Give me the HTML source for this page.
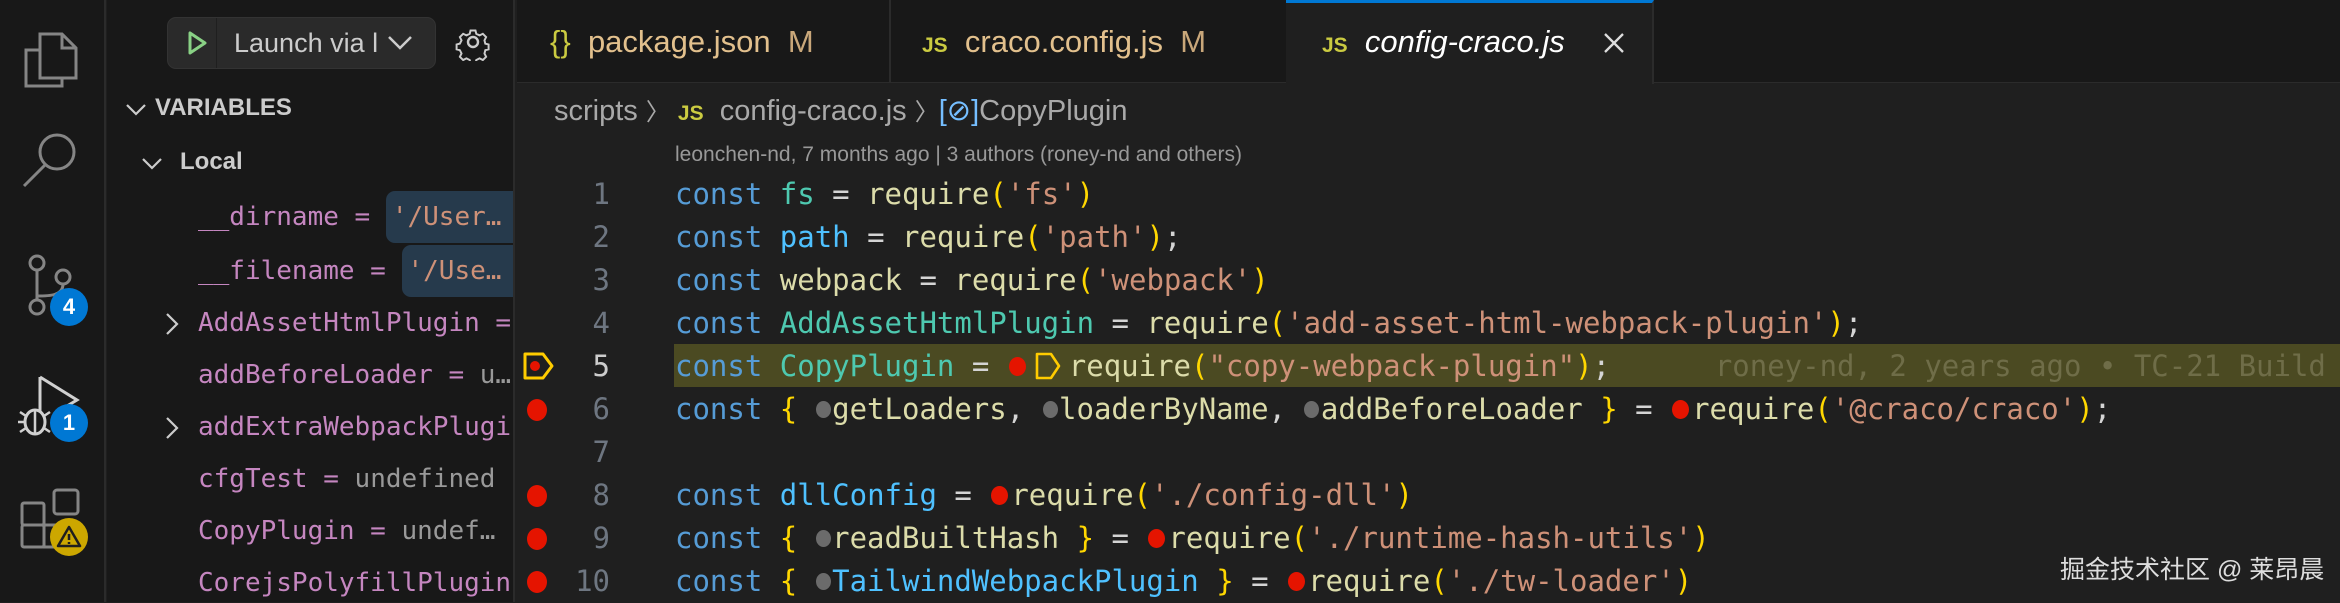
<!DOCTYPE html>
<html><head><meta charset="utf-8"><style>
*{margin:0;padding:0;box-sizing:border-box}
body{width:2340px;height:602px;background:#1f1f1f;overflow:hidden;position:relative;font-family:"Liberation Sans","DejaVu Sans",sans-serif}
.abs{position:absolute;white-space:pre}
#act{position:absolute;left:0;top:0;width:106px;height:602px;background:#181818;border-right:2px solid #2b2b2b}
#side{position:absolute;left:107px;top:0;width:408px;height:602px;background:#181818;border-right:2px solid #2b2b2b;overflow:hidden}
.mono{font-family:"DejaVu Sans Mono","Liberation Mono",monospace}
.sv{font-size:26px;color:#c586c0;height:50px;line-height:50px}
.vb{display:inline-block;background:#263a4c;border-radius:9px;padding:0 40px 0 6px;height:52px;line-height:52px;color:#ce9178}
.code{font-family:"DejaVu Sans Mono","Liberation Mono",monospace;font-size:29px;left:675px;height:43px;line-height:43px;color:#d4d4d4}
.ln{font-family:"DejaVu Sans Mono","Liberation Mono",monospace;font-size:29px;width:80px;text-align:right;left:530px;height:43px;line-height:43px;color:#6e7681}
.k{color:#569cd6}.c{color:#4ec9b0}.f{color:#dcdcaa}.s{color:#ce9178}.v{color:#4fc1ff}.b{color:#ffd700}
.gd{display:inline-block;width:17.4px;height:43px;position:relative;vertical-align:top}
.gd:after{content:"";position:absolute;left:1px;top:13px;width:15px;height:17px;border-radius:50%;background:#6b6b6b}
.rd{display:inline-block;width:22px;height:43px;position:relative;vertical-align:top}
.rd:after{content:"";position:absolute;left:2px;top:12px;width:17px;height:19px;border-radius:50%;background:#e51400}
.bp{position:absolute;left:527px;width:20px;height:22px;border-radius:50%;background:#e51400}
</style></head><body>
<div id="act">
<svg width="106" height="602" style="position:absolute;left:0;top:0" fill="none" stroke="#858585" stroke-width="3">
 <path d="M40 34h22l14 14v30h-36z M62 34v14h14"/>
 <path d="M40 50h-14v36h36v-8"/>
 <circle cx="57" cy="152" r="17"/><path d="M45 165l-21 21"/>
 <circle cx="37" cy="263" r="7"/><circle cx="63" cy="277" r="7"/><circle cx="37" cy="307" r="7"/>
 <path d="M37 270v30 M63 284c0 12-14 12-26 12"/>
 <path d="M40 377v35 M40 377l37 23-20 12" stroke="#d0d0d0"/>
 <ellipse cx="35" cy="422" rx="10" ry="12" stroke="#d0d0d0"/><path d="M20 412l6 4M20 432l6-4M18 422h7M50 412l-6 4M50 432l-6-4M35 410v24" stroke="#d0d0d0" stroke-width="2.5"/>
 <rect x="22" y="503" width="22" height="22" rx="2"/><rect x="22" y="525" width="22" height="22" rx="2"/><rect x="44" y="525" width="16" height="22"/>
 <rect x="54" y="490" width="24" height="24" rx="3"/>
</svg>
<div class="abs" style="left:50px;top:288px;width:38px;height:38px;border-radius:50%;background:#0078d4;color:#fff;font-weight:bold;font-size:22px;text-align:center;line-height:38px">4</div>
<div class="abs" style="left:50px;top:404px;width:38px;height:38px;border-radius:50%;background:#0078d4;color:#fff;font-weight:bold;font-size:22px;text-align:center;line-height:38px">1</div>
<div class="abs" style="left:50px;top:518px;width:38px;height:38px;border-radius:50%;background:#cca700"><svg width="38" height="38"><path d="M19 9L30 28H8z" fill="none" stroke="#1e1e1e" stroke-width="2.5" stroke-linejoin="round"/><path d="M19 16v6M19 24v2" stroke="#1e1e1e" stroke-width="2.5"/></svg></div>
</div>
<div id="side">
 <div class="abs" style="left:60px;top:17px;width:269px;height:52px;background:#2a2a2a;border:1px solid #333;border-radius:9px"></div>
 <div class="abs" style="left:109px;top:18px;width:1px;height:50px;background:#1f1f1f"></div>
 <svg class="abs" style="left:75px;top:28px" width="30" height="30"><path d="M8 5v20l15-10z" fill="none" stroke="#89d185" stroke-width="3" stroke-linejoin="round"/></svg>
 <div class="abs" style="left:127px;top:24px;font-size:27px;color:#cccccc;line-height:38px">Launch via l</div>
 <svg class="abs" style="left:278px;top:30px" width="30" height="24"><path d="M4 7l11 11 11-11" fill="none" stroke="#ccc" stroke-width="2.5"/></svg>
 <svg class="abs" style="left:347px;top:23px" width="38" height="38" fill="none" stroke="#ccc" stroke-width="2.4"><circle cx="19" cy="19" r="5"/><path d="M16 5h6l1 4 4 2 4-2 4 4-2 4 1 4 4 1v6l-4 1-1 4 2 4-4 4-4-2-4 2-1 4h-6l-1-4-4-2-4 2-4-4 2-4-2-4-4-1v-6l4-1 2-4-2-4 4-4 4 2 4-2z" transform="translate(19 19) scale(.82) translate(-19 -19)"/></svg>
 <svg class="abs" style="left:16px;top:98px" width="26" height="24"><path d="M4 7l9 9 9-9" fill="none" stroke="#ccc" stroke-width="2.2"/></svg>
 <div class="abs" style="left:48px;top:94px;font-size:24px;font-weight:bold;color:#cccccc">VARIABLES</div>
 <svg class="abs" style="left:32px;top:152px" width="26" height="24"><path d="M4 7l9 9 9-9" fill="none" stroke="#ccc" stroke-width="2.2"/></svg>
 <div class="abs" style="left:73px;top:148px;font-size:24px;font-weight:bold;color:#cccccc">Local</div>
 <div class="abs mono sv" style="left:91px;top:191px">__dirname = <span class="vb">'/User…</span></div>
 <div class="abs mono sv" style="left:91px;top:245px">__filename = <span class="vb">'/Use…</span></div>
 <div class="abs mono sv" style="left:91px;top:298px">AddAssetHtmlPlugin =</div>
 <div class="abs mono sv" style="left:91px;top:350px">addBeforeLoader = <span style="color:#999">u…</span></div>
 <div class="abs mono sv" style="left:91px;top:402px">addExtraWebpackPlugi</div>
 <div class="abs mono sv" style="left:91px;top:454px">cfgTest = <span style="color:#999">undefined</span></div>
 <div class="abs mono sv" style="left:91px;top:506px">CopyPlugin = <span style="color:#999">undef…</span></div>
 <div class="abs mono sv" style="left:91px;top:558px">CorejsPolyfillPlugin</div>
 <svg class="abs" style="left:55px;top:311px" width="20" height="26"><path d="M5 3l10 10-10 10" fill="none" stroke="#ccc" stroke-width="2.2"/></svg>
 <svg class="abs" style="left:55px;top:415px" width="20" height="26"><path d="M5 3l10 10-10 10" fill="none" stroke="#ccc" stroke-width="2.2"/></svg>
</div>
<div class="abs" style="left:517px;top:0;width:1823px;height:83px;background:#181818;border-bottom:1px solid #2b2b2b"></div>
<div class="abs" style="left:889px;top:0;width:2px;height:82px;background:#2b2b2b"></div>
<div class="abs" style="left:1286px;top:0;width:368px;height:84px;background:#1f1f1f;border-top:3px solid #0078d4;border-right:2px solid #2b2b2b"></div>
<div class="abs" style="left:550px;top:22px;font-size:31px;line-height:40px;color:#e2c08d"><span style="color:#cbcb41">{}</span>  package.json  <span style="color:#c9a77a">M</span></div>
<div class="abs" style="left:922px;top:22px;font-size:31px;line-height:40px;color:#e2c08d"><span style="color:#cbcb41;font-size:21px;font-weight:bold">JS</span>  craco.config.js  <span style="color:#c9a77a">M</span></div>
<div class="abs" style="left:1322px;top:22px;font-size:31px;line-height:40px;color:#fff"><span style="color:#cbcb41;font-size:21px;font-weight:bold">JS</span>  <i>config-craco.js</i></div>
<svg class="abs" style="left:1602px;top:31px" width="24" height="24"><path d="M3 3l18 18M21 3L3 21" stroke="#ddd" stroke-width="2.3"/></svg>
<div class="abs" style="left:554px;top:92px;font-size:29px;line-height:38px;color:#a9a9a9">scripts <span style="font-size:24px">〉</span> <span style="color:#cbcb41;font-size:21px;font-weight:bold">JS</span>  config-craco.js <span style="font-size:24px">〉</span><span style="color:#75beff">[⊘]</span>CopyPlugin</div>
<div class="abs" style="left:675px;top:141px;font-size:21px;line-height:28px;color:#999">leonchen-nd, 7 months ago | 3 authors (roney-nd and others)</div>
<div class="abs" style="left:674px;top:344px;width:1666px;height:43px;background:#4b4a22"></div>
<div class="abs ln" style="top:173px">1</div>
<div class="abs ln" style="top:216px">2</div>
<div class="abs ln" style="top:259px">3</div>
<div class="abs ln" style="top:302px">4</div>
<div class="abs ln" style="top:345px;color:#ccc">5</div>
<div class="abs ln" style="top:388px">6</div>
<div class="abs ln" style="top:431px">7</div>
<div class="abs ln" style="top:474px">8</div>
<div class="abs ln" style="top:517px">9</div>
<div class="abs ln" style="top:560px">10</div>
<svg class="abs" style="left:522px;top:351px" width="34" height="30"><path d="M3 3h18l9 12-9 12H3z" fill="none" stroke="#ffcc00" stroke-width="3" stroke-linejoin="round"/><circle cx="13" cy="15" r="5" fill="#e51400"/></svg>
<div class="bp" style="top:399px"></div>
<div class="bp" style="top:485px"></div>
<div class="bp" style="top:528px"></div>
<div class="bp" style="top:571px"></div>
<div class="abs code" style="top:173px"><span class="k">const</span> <span class="c">fs</span> = <span class="f">require</span><span class="b">(</span><span class="s">'fs'</span><span class="b">)</span></div>
<div class="abs code" style="top:216px"><span class="k">const</span> <span class="v">path</span> = <span class="f">require</span><span class="b">(</span><span class="s">'path'</span><span class="b">)</span>;</div>
<div class="abs code" style="top:259px"><span class="k">const</span> <span class="f">webpack</span> = <span class="f">require</span><span class="b">(</span><span class="s">'webpack'</span><span class="b">)</span></div>
<div class="abs code" style="top:302px"><span class="k">const</span> <span class="c">AddAssetHtmlPlugin</span> = <span class="f">require</span><span class="b">(</span><span class="s">'add-asset-html-webpack-plugin'</span><span class="b">)</span>;</div>
<div class="abs code" style="top:345px"><span class="k">const</span> <span class="c">CopyPlugin</span> = <span class="rd"></span><svg width="40" height="43" style="vertical-align:top"><path d="M8 9h14l8 12-8 12H8z" fill="none" stroke="#ffcc00" stroke-width="2.6" stroke-linejoin="round"/></svg><span class="f">require</span><span class="b">(</span><span class="s">"copy-webpack-plugin"</span><span class="b">)</span>;      <span style="color:#6f6d48">roney-nd, 2 years ago • TC-21 Build</span></div>
<div class="abs code" style="top:388px"><span class="k">const</span> <span class="b">{</span> <span class="gd"></span><span class="f">getLoaders</span>, <span class="gd"></span><span class="f">loaderByName</span>, <span class="gd"></span><span class="f">addBeforeLoader</span> <span class="b">}</span> = <span class="rd"></span><span class="f">require</span><span class="b">(</span><span class="s">'@craco/craco'</span><span class="b">)</span>;</div>
<div class="abs code" style="top:474px"><span class="k">const</span> <span class="v">dllConfig</span> = <span class="rd"></span><span class="f">require</span><span class="b">(</span><span class="s">'./config-dll'</span><span class="b">)</span></div>
<div class="abs code" style="top:517px"><span class="k">const</span> <span class="b">{</span> <span class="gd"></span><span class="f">readBuiltHash</span> <span class="b">}</span> = <span class="rd"></span><span class="f">require</span><span class="b">(</span><span class="s">'./runtime-hash-utils'</span><span class="b">)</span></div>
<div class="abs code" style="top:560px"><span class="k">const</span> <span class="b">{</span> <span class="gd"></span><span class="v">TailwindWebpackPlugin</span> <span class="b">}</span> = <span class="rd"></span><span class="f">require</span><span class="b">(</span><span class="s">'./tw-loader'</span><span class="b">)</span></div>
<div class="abs" style="left:2060px;top:553px;font-size:25px;line-height:34px;color:#dddddd;font-family:'Liberation Sans','Noto Sans CJK SC',sans-serif">掘金技术社区 @ 莱昂晨</div>
</body></html>
